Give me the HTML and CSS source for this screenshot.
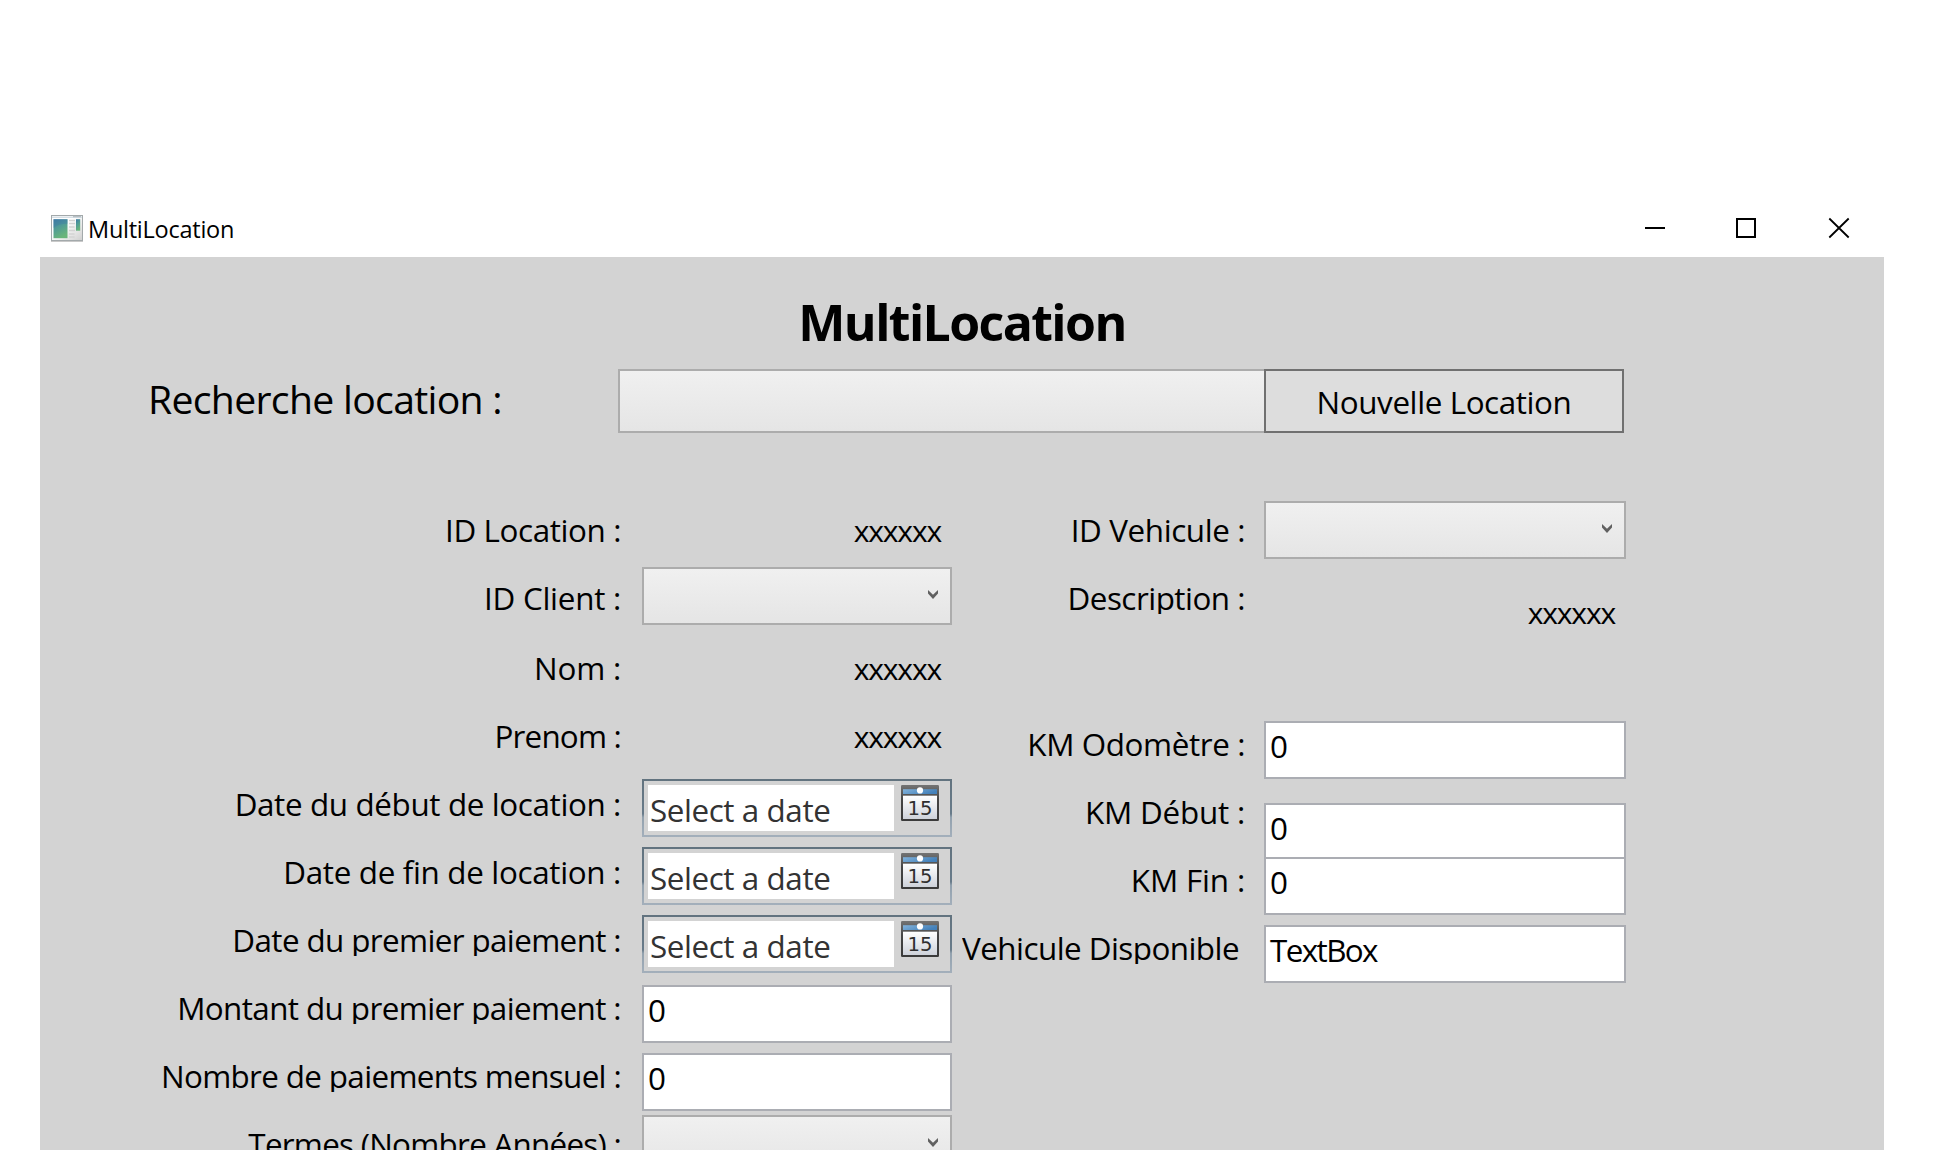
FILE: index.html
```html
<!DOCTYPE html>
<html lang="fr">
<head>
<meta charset="utf-8">
<title>MultiLocation</title>
<link rel="stylesheet" href="styles.css">
</head>
<body>
<svg width="0" height="0" class="defs" aria-hidden="true">
  <defs>
    <linearGradient id="calTop" x1="0" y1="0" x2="1" y2="0.4"><stop offset="0" stop-color="#83b3db"/><stop offset="1" stop-color="#4481ba"/></linearGradient>
    <linearGradient id="calPage" x1="0" y1="0" x2="0" y2="1"><stop offset="0" stop-color="#fff"/><stop offset="1" stop-color="#ced2da"/></linearGradient>
    <linearGradient id="calFrame" x1="0" y1="0" x2="0" y2="1"><stop offset="0" stop-color="#747474"/><stop offset="0.4" stop-color="#454545"/><stop offset="1" stop-color="#3a3a3a"/></linearGradient>
    <linearGradient id="appPane" x1="0" y1="0" x2="0.4" y2="1"><stop offset="0" stop-color="#3d78a4"/><stop offset="0.45" stop-color="#4f9a97"/><stop offset="1" stop-color="#69b57a"/></linearGradient>
    <linearGradient id="appFrame" x1="0" y1="0" x2="1" y2="1"><stop offset="0.4" stop-color="#fff"/><stop offset="1" stop-color="#cfcfcf"/></linearGradient>
    <symbol id="calendar" viewBox="0 0 38 36">
      <rect width="38" height="36" rx="1.2" fill="url(#calFrame)"/>
      <rect x="2" y="4.2" width="34" height="4.8" fill="url(#calTop)"/>
      <rect x="2" y="10" width="34" height="1" fill="#8a8a8a"/>
      <rect x="2" y="11" width="34" height="23" fill="url(#calPage)"/>
      <circle cx="19" cy="5.4" r="3.1" fill="#fff"/>
      <text x="6.500" y="30" textLength="25" lengthAdjust="spacingAndGlyphs" class="cal-day">15</text>
    </symbol>
    <symbol id="chevron" viewBox="0 0 10 9">
      <path d="M0 0 L5 4.8 L10 0 V3.4 L5 9 L0 3.4 Z" fill="#606060"/>
    </symbol>
  </defs>
</svg>

<div class="window">
  <header class="titlebar">
    <svg class="app-icon" width="32" height="27" viewBox="0 0 32 27">
      <rect x="0.5" y="0.5" width="31" height="25" fill="url(#appFrame)" stroke="#a3a9ab"/>
      <path d="M1 1.5h30v1.5H1z" fill="#d6dfe5"/><path d="M22 1.2h8v1h-8z" fill="#a9b3b8"/>
      <rect x="2.5" y="4.2" width="14" height="19" fill="url(#appPane)"/>
      <path d="M2.5 13 Q8 8.5 16.5 8.8 V4.2 H2.5Z" fill="#3f7ba6" opacity=".4"/>
      <path d="M18 5.5h6M18 8.5h6M18 12h5.500M18 15.500h6M18 19h5.500M18 22h5.500" stroke="#d3d3d3" stroke-width="1.6"/>
      <rect x="25" y="4.200" width="4.200" height="11.500" fill="url(#appPane)"/>
      <path d="M0 26.500h32" stroke="#c9c9c9"/>
    </svg>
    <span class="title">MultiLocation</span>
    <div class="controls">
      <svg width="22" height="22" viewBox="0 0 22 22"><path d="M1 11h20" stroke="#000" stroke-width="2"/></svg>
      <svg width="22" height="22" viewBox="0 0 22 22"><rect x="1" y="2" width="18" height="18" fill="none" stroke="#000" stroke-width="2"/></svg>
      <svg width="22" height="22" viewBox="0 0 22 22"><path d="M1.300 1.500l19.400 19M20.700 1.500l-19.400 19" stroke="#000" stroke-width="1.800"/></svg>
    </div>
  </header>

  <main class="client">
    <h1>MultiLocation</h1>
    <div class="search">
      <span class="search-label">Recherche location :</span>
      <div class="combo search-combo"></div>
      <div class="button">Nouvelle Location</div>
    </div>

    <div class="form">
      <div class="labels">
        <span class="label id-location">ID Location :</span>
        <span class="label id-client">ID Client :</span>
        <span class="label nom">Nom :</span>
        <span class="label prenom">Prenom :</span>
        <span class="label date-debut">Date du début de location :</span>
        <span class="label date-fin">Date de fin de location :</span>
        <span class="label date-paiement">Date du premier paiement :</span>
        <span class="label montant">Montant du premier paiement :</span>
        <span class="label nombre">Nombre de paiements mensuel :</span>
        <span class="label termes">Termes (Nombre Années) :</span>
      </div>
      <div class="fields">
        <span class="value v-location">xxxxxx</span>
        <div class="combo c-client"><svg width="10" height="9"><use href="#chevron"/></svg></div>
        <span class="value v-nom">xxxxxx</span>
        <span class="value v-prenom">xxxxxx</span>
        <div class="dates">
          <div class="date"><span>Select a date</span><svg width="38" height="36"><use href="#calendar"/></svg></div>
          <div class="date"><span>Select a date</span><svg width="38" height="36"><use href="#calendar"/></svg></div>
          <div class="date"><span>Select a date</span><svg width="38" height="36"><use href="#calendar"/></svg></div>
        </div>
        <div class="input i-montant">0</div>
        <div class="input i-nombre">0</div>
        <div class="combo c-termes"><svg width="10" height="9"><use href="#chevron"/></svg></div>
      </div>
      <div class="labels">
        <span class="label id-vehicule">ID Vehicule :</span>
        <span class="label description">Description :</span>
        <span class="label odometre">KM Odomètre :</span>
        <span class="label km-debut">KM Début :</span>
        <span class="label km-fin">KM Fin :</span>
        <span class="label disponible">Vehicule Disponible</span>
      </div>
      <div class="fields">
        <div class="combo c-vehicule"><svg width="10" height="9"><use href="#chevron"/></svg></div>
        <span class="value v-description">xxxxxx</span>
        <div class="input i-odometre">0</div>
        <div class="input i-debut">0</div>
        <div class="input i-fin">0</div>
        <div class="input i-disponible">TextBox</div>
      </div>
    </div>
  </main>
</div>
</body>
</html>
```
FILE: styles.css
```css
* { box-sizing: border-box; }
html, body { height: 1150px; overflow: hidden; }
body {
  margin: 0;
  background: #fff;
  color: #000;
  font: 31.4px/44px "Open Sans", "Noto Sans", sans-serif;
}
svg { display: block; flex: none; }
.defs { position: absolute; }
.window { height: 1150px; padding: 200px 60px 0 40px; overflow: hidden; }

.titlebar { display: flex; align-items: flex-start; height: 57px; padding-left: 11px; }
.app-icon { margin-top: 15px; }
.title { margin: 13px 0 0 5px; font-size: 23.5px; line-height: 32px; letter-spacing: -0.25px; }
.controls { display: flex; gap: 70px; margin: 17px 34px 0 auto; }

.client { height: 900px; padding-top: 30px; background: #d3d3d3; }
h1 { margin: 0 0 11px; font-size: 50px; line-height: 71px; font-weight: 700; letter-spacing: -1.6px; text-align: center; }

.search { display: flex; height: 64px; padding-left: 108px; }
.search-label { width: 470px; font-size: 39.2px; line-height: 60px; letter-spacing: -0.7px; white-space: nowrap; }
.combo { height: 58px; border: 2px solid #acacac; background: linear-gradient(#f0f0f0, #e5e5e5); }
.search-combo { width: 646px; height: 64px; border-right: 0; }
.button { width: 360px; border: 2px solid #707070; background: #ddd; text-align: center; line-height: 61px; letter-spacing: -0.4px; }

.form { display: grid; grid-template-columns: 602px 310px 312px 362px; margin-top: 68px; }
.labels { display: flex; flex-direction: column; gap: 31px; align-items: flex-end; padding: 7px 21px 0 0; }
.fields + .labels { padding-right: 19px; }
.label { flex: none; height: 38px; margin-bottom: -1px; overflow: hidden; white-space: nowrap; }
.fields { display: flex; flex-direction: column; }
.fields > * { flex: none; }

.id-location { letter-spacing: -0.4px; }
.id-client { letter-spacing: -0.25px; }
.nom { margin-top: 2px; letter-spacing: -0.2px; }
.prenom { letter-spacing: -0.8px; }
.date-debut { letter-spacing: -0.37px; }
.date-fin { letter-spacing: -0.33px; }
.date-paiement { letter-spacing: -0.62px; }
.montant { letter-spacing: -0.6px; }
.nombre { letter-spacing: -0.65px; }
.termes { letter-spacing: -0.74px; }
.id-vehicule { letter-spacing: -0.4px; }
.description { letter-spacing: -0.5px; }
.odometre { margin-top: 78px; letter-spacing: -0.4px; }
.km-debut { letter-spacing: -0.2px; }
.km-fin { letter-spacing: -0.15px; }
.disponible { margin-right: 6px; letter-spacing: -0.54px; }

.value { height: 37px; padding-right: 11px; font-size: 30px; line-height: 45px; text-align: right; letter-spacing: -1.15px; }
.v-location { margin-top: 7px; }
.c-client { margin-top: 22px; }
.v-nom { margin-top: 21px; }
.v-prenom { margin-top: 31px; }
.v-description { margin-top: 31px; }

.combo svg { margin: 21px 12px 0 auto; }

.dates { display: grid; gap: 10px; margin-top: 28px; }
.date {
  display: flex;
  align-items: flex-start;
  gap: 7px;
  height: 58px;
  padding: 4px;
  border: 2px solid;
  border-image: linear-gradient(#62737f, #687b8a 60%, #92a1ae 66%, #a3afbb) 2;
}
.date span { width: 246px; height: 46px; padding-left: 2px; background: #fff; color: #333; line-height: 49px; letter-spacing: -0.42px; }
.cal-day { font: 500 19.5px "DejaVu Sans", sans-serif; fill: #2f2f2f; }

.input { height: 58px; padding-left: 4px; border: 2px solid #abadb3; background: #fff; line-height: 45px; }
.i-montant { margin-top: 12px; }
.i-nombre { margin-top: 10px; }
.c-termes { margin-top: 4px; }
.i-odometre { margin-top: 94px; }
.i-debut { margin-top: 24px; }
.i-fin { margin-top: -4px; }
.i-disponible { margin-top: 10px; letter-spacing: -1.6px; }
```
